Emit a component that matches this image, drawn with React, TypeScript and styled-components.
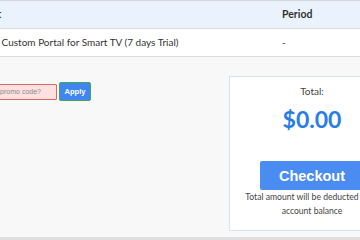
import styled, { createGlobalStyle } from 'styled-components';

const GlobalStyle = createGlobalStyle`
  html, body {
    margin: 0;
    padding: 0;
    overflow: hidden;
    background: #f8f8f8;
    font-family: Lato, "Open Sans", sans-serif;
    color: #333;
  }
`;

const Page = styled.div`
  width: 440px;
  margin-left: -40px;
  border-top: 1px solid #d6d6d6;
`;

const Table = styled.div`
  display: grid;
  grid-template-columns: 318px 1fr;
`;

const HeadCell = styled.div`
  height: 27px;
  line-height: 27px;
  padding-left: 4px;
  background: #eaf3fd;
  border-bottom: 1px solid #dcdcdc;
  font-size: 10.5px;
  font-weight: 700;
  color: #333;
`;

const Cell = styled.div<{ $indent?: number }>`
  height: 27px;
  line-height: 27px;
  padding-left: ${(p) => p.$indent ?? 4}px;
  background: #fff;
  border-bottom: 1px solid #dcdcdc;
  font-size: 10px;
  color: #333;
  white-space: nowrap;
`;

const Bottom = styled.div`
  display: flex;
  align-items: flex-start;
  justify-content: space-between;
  margin-top: 19px;
  padding: 0 5px 0 12px;
`;

const PromoForm = styled.div`
  display: flex;
  align-items: center;
  gap: 2px;
  margin-top: 6px;
`;

const PromoInput = styled.input`
  box-sizing: border-box;
  width: 85px;
  height: 16px;
  padding: 0 3px;
  background: #fde0e0;
  border: 1px solid #d46a6a;
  border-radius: 1px;
  font-family: "Liberation Sans", Arial, sans-serif;
  font-size: 7px;
  outline: none;
  &::placeholder {
    color: #8a8a8a;
  }
`;

const ApplyButton = styled.button`
  box-sizing: border-box;
  width: 32px;
  height: 19px;
  padding: 0;
  background: #3f86f2;
  border: 1px solid #45a84a;
  border-radius: 2px;
  color: #fff;
  font-family: "Liberation Sans", Arial, sans-serif;
  font-weight: 700;
  font-size: 7.5px;
`;

const Card = styled.div`
  box-sizing: border-box;
  width: 166px;
  height: 155px;
  padding: 7px 0 12px;
  background: #fff;
  border: 1px solid #cfe4fb;
  display: flex;
  flex-direction: column;
  align-items: center;
`;

const TotalLabel = styled.div`
  font-size: 10px;
  line-height: 14px;
  color: #444;
`;

const Amount = styled.div`
  margin-top: 7px;
  font-size: 23px;
  line-height: 28px;
  font-weight: 700;
  color: #2b7de6;
`;

const CheckoutButton = styled.button`
  margin-top: 28px;
  width: 104px;
  height: 31px;
  padding: 0;
  background: #4a8cf1;
  border: none;
  border-radius: 2px;
  color: #fff;
  font-family: "Liberation Sans", Arial, sans-serif;
  font-weight: 700;
  font-size: 14.5px;
`;

const Note = styled.div`
  width: 142px;
  text-align: center;
  font-size: 8.6px;
  line-height: 14px;
  color: #444;
`;

const Footer = styled.div`
  margin-top: 6px;
  height: 10px;
  background: #dedede;
`;

const App = () => {
  return (
    <>
      <GlobalStyle />
      <Page>
        <Table>
          <HeadCell>Product</HeadCell>
          <HeadCell>Period</HeadCell>
          <Cell $indent={0}>Premium Custom Portal for Smart TV (7 days Trial)</Cell>
          <Cell>-</Cell>
        </Table>

        <Bottom>
          <PromoForm>
            <PromoInput placeholder="Have a promo code?" />
            <ApplyButton>Apply</ApplyButton>
          </PromoForm>

          <Card>
            <TotalLabel>Total:</TotalLabel>
            <Amount>$0.00</Amount>
            <CheckoutButton>Checkout</CheckoutButton>
            <Note>Total amount will be deducted from account balance</Note>
          </Card>
        </Bottom>

        <Footer />
      </Page>
    </>
  );
};

export default App;
